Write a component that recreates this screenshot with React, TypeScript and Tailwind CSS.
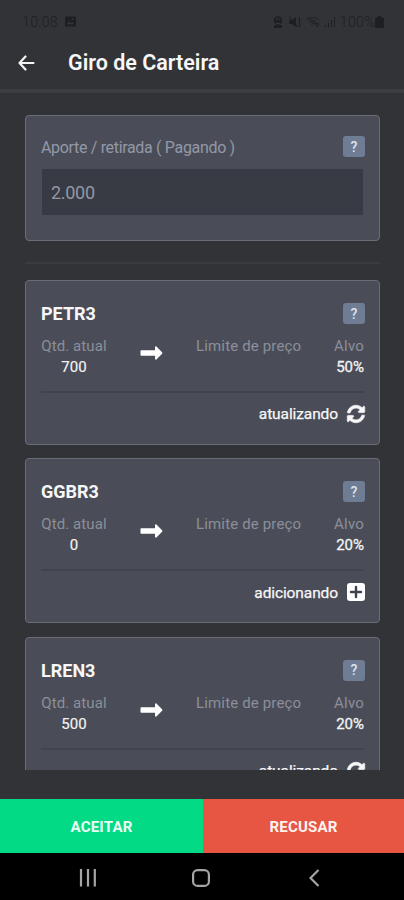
import React from "react";
import { FaSyncAlt } from "react-icons/fa";

type Asset = {
  ticker: string;
  amount: string;
  target: string;
  status: "atualizando" | "adicionando";
};

const assets: Asset[] = [
  { ticker: "PETR3", amount: "700", target: "50%", status: "atualizando" },
  { ticker: "GGBR3", amount: "0", target: "20%", status: "adicionando" },
  { ticker: "LREN3", amount: "500", target: "20%", status: "atualizando" },
];

function StatusBar() {
  return (
    <div className="flex h-[43px] items-center justify-between pl-[22px] pr-[20px] text-[#1e1f23]">
      <div className="flex items-center gap-[7px]">
        <span className="text-[14px] leading-none font-light tracking-[0.4px]">10:08</span>
        <svg width="11" height="11" viewBox="0 0 12 11">
          <rect width="12" height="11" rx="1.5" fill="currentColor" />
          <path d="M2 8.5l2.5-3 2 2 1.5-1.5 2 2.5z" fill="#34353a" />
          <circle cx="8.5" cy="3" r="1" fill="#34353a" />
        </svg>
      </div>
      <div className="flex items-center">
        <svg className="mr-[5px]" width="10" height="12" viewBox="0 0 10 12">
          <circle cx="5" cy="4.5" r="4.3" fill="currentColor" />
          <path d="M1 9h8v3H1z" fill="currentColor" />
          <path d="M3 4.5a2 2 0 0 1 4 0M3 7.5h4" stroke="#34353a" fill="none" />
        </svg>
        <svg className="mr-[5px]" width="13" height="12" viewBox="0 0 13 12">
          <path d="M1 4h3l4-3v10L4 8H1z" fill="currentColor" />
          <path d="M1 1l9 10M11.5 1v10" stroke="currentColor" strokeWidth="1.1" />
        </svg>
        <svg className="mr-[3px]" width="15" height="12" viewBox="0 0 15 12" fill="none" stroke="currentColor">
          <path d="M1 4a9 9 0 0 1 12 0M3 6.5a6 6 0 0 1 7-1M5 8.5a3 3 0 0 1 3-.5M2 1l10 10" />
          <path d="M9 7l4 1-2 3" />
        </svg>
        <svg className="mr-[4px]" width="12" height="12" viewBox="0 0 12 12" stroke="currentColor">
          <path d="M1.5 9v2M4.5 7v4M7.5 4v7M10.5 1v10" />
        </svg>
        <span className="text-[14px] leading-none font-light tracking-[0.4px]">100%</span>
        <svg width="9" height="12" viewBox="0 0 9 12" fill="currentColor">
          <path d="M3 0h3v1.5h1.5A1.5 1.5 0 0 1 9 3v7.5A1.5 1.5 0 0 1 7.5 12h-6A1.5 1.5 0 0 1 0 10.5V3a1.5 1.5 0 0 1 1.5-1.5H3z" />
        </svg>
      </div>
    </div>
  );
}

function Header() {
  return (
    <header className="flex h-[50px] items-center border-b-4 border-[#3d3e43] pb-[7px] pl-[18px]">
      <svg width="17" height="16" viewBox="0 0 17 16" fill="none" stroke="#f4f4f5" strokeWidth="2.2" strokeLinecap="round" strokeLinejoin="round">
        <path d="M15.5 8H1.5M7.5 1.5L1.5 8l6 6.5" />
      </svg>
      <h1 className="ml-[33px] pt-px text-[21.5px] leading-none font-semibold text-[#f7f7f8]">Giro de Carteira</h1>
    </header>
  );
}

function HelpButton() {
  return (
    <button className="-mr-px flex h-[21px] w-[22px] items-center justify-center rounded-[3px] bg-[#6f7d94] text-[14px] leading-none font-medium text-[#dfe5ee]">
      ?
    </button>
  );
}

function ArrowRight() {
  return (
    <svg width="23" height="14" viewBox="0 0 23 14" fill="#ffffff">
      <path d="M.5 5a.8.8 0 0 1 .8-.8H15V1.200c0-.8.9-1.100 1.400-.6l5.700 5.700a1 1 0 0 1 0 1.400l-5.700 5.700c-.5.500-1.400.2-1.400-.6V9.800H1.300A.8.8 0 0 1 .5 9z" />
    </svg>
  );
}

function PlusSquare() {
  return (
    <svg width="18" height="18" viewBox="0 0 18 18">
      <rect width="18" height="18" rx="3" fill="#ffffff" />
      <path d="M9 4v10M4 9h10" stroke="#3f424b" strokeWidth="2.4" strokeLinecap="round" />
    </svg>
  );
}

function AssetCard({ asset }: { asset: Asset }) {
  return (
    <section className="h-[165px] shrink-0 rounded-[4px] border border-[#696d77] bg-[#4a4d57] px-[15px] pt-[22px]">
      <div className="flex h-[21px] items-center justify-between">
        <h2 className="pt-px text-[18px] leading-none font-bold text-[#f7f7f8]">{asset.ticker}</h2>
        <HelpButton />
      </div>
      <div className="mt-[12px] flex h-[42px] text-[15px] leading-[21px] text-[#8b8f9b]">
        <div className="w-[66px] text-center whitespace-nowrap">
          <div className="tracking-[0.1px]">Qtd. atual</div>
          <div className="text-[#f4f4f5] [-webkit-text-stroke:0.15px]">{asset.amount}</div>
        </div>
        <div className="flex w-[89px] items-center justify-center pb-[8px]">
          <ArrowRight />
        </div>
        <div className="tracking-[0.15px] whitespace-nowrap">Limite de preço</div>
        <div className="ml-auto text-right">
          <div className="tracking-[0.2px]">Alvo</div>
          <div className="text-[#f4f4f5] [-webkit-text-stroke:0.3px]">{asset.target}</div>
        </div>
      </div>
      <div className="mt-[13px] h-[2px] bg-[#41444d]" />
      <div className="mt-[10px] -mr-px flex h-[22px] items-center justify-end gap-[9px] text-[15.5px] leading-none text-[#f7f7f8]">
        <span className="pt-[2px] tracking-[-0.1px] [-webkit-text-stroke:0.25px]">{asset.status}</span>
        {asset.status === "atualizando" ? (
          <FaSyncAlt className="h-[18px] w-[18px] overflow-visible" strokeWidth={20} stroke="currentColor" />
        ) : (
          <PlusSquare />
        )}
      </div>
    </section>
  );
}

function NavigationBar() {
  return (
    <nav className="flex h-[47px] items-center bg-black pt-[2px] text-[#a5a5a5]">
      <svg className="ml-[79px]" width="17" height="18" viewBox="0 0 17 18" stroke="currentColor" strokeWidth="2.2">
        <path d="M2 0v17.5M9 0v17.5M15.800 0v17.5" />
      </svg>
      <svg className="ml-[96px]" width="18" height="18" viewBox="0 0 18 18" fill="none" stroke="currentColor" strokeWidth="2.2">
        <rect x="1.1" y="1.1" width="15.8" height="15.8" rx="4.5" />
      </svg>
      <svg className="ml-[99px]" width="11" height="18" viewBox="0 0 11 18" fill="none" stroke="currentColor" strokeWidth="2.2">
        <path d="M9.5 1L1.500 9l8 8" />
      </svg>
    </nav>
  );
}

export default function App() {
  return (
    <div className="flex h-[900px] w-[404px] flex-col overflow-hidden bg-[#323337] font-['Roboto',sans-serif]">
      <StatusBar />
      <Header />
      <main className="flex h-[677px] shrink-0 flex-col overflow-hidden px-[25px] pt-[22px]">
        <section className="h-[126px] w-[355px] shrink-0 rounded-[4px] border border-[#696d77] bg-[#4a4d57] px-[15px] pt-[20px]">
          <div className="flex h-[21px] items-center justify-between">
            <label className="pt-[2px] text-[16px] leading-none tracking-[-0.33px] text-[#9398a7]">Aporte / retirada ( Pagando )</label>
            <HelpButton />
          </div>
          <div className="mt-[12px] mr-px ml-px flex h-[46px] items-center bg-[#393b44] pt-[2px] pl-[9px] text-[18px] leading-none tracking-[-0.3px] text-[#9297a5]">
            2.000
          </div>
        </section>
        <div className="mt-[21px] h-[2px] w-[355px] shrink-0 bg-[#3b3c41]" />
        <div className="mt-[16px] flex w-[355px] flex-col gap-[13.3px]">
          {assets.map((asset) => (
            <AssetCard key={asset.ticker} asset={asset} />
          ))}
        </div>
      </main>
      <div className="mt-[29px] flex h-[54px] shrink-0 text-[15px] font-bold">
        <button className="w-[203px] bg-[#02da86] pt-[2px] tracking-[0.2px] text-[#e9fff5]">ACEITAR</button>
        <button className="flex-1 bg-[#e75543] pt-[2px] tracking-[0.2px] text-[#fff3f0]">RECUSAR</button>
      </div>
      <NavigationBar />
    </div>
  );
}
